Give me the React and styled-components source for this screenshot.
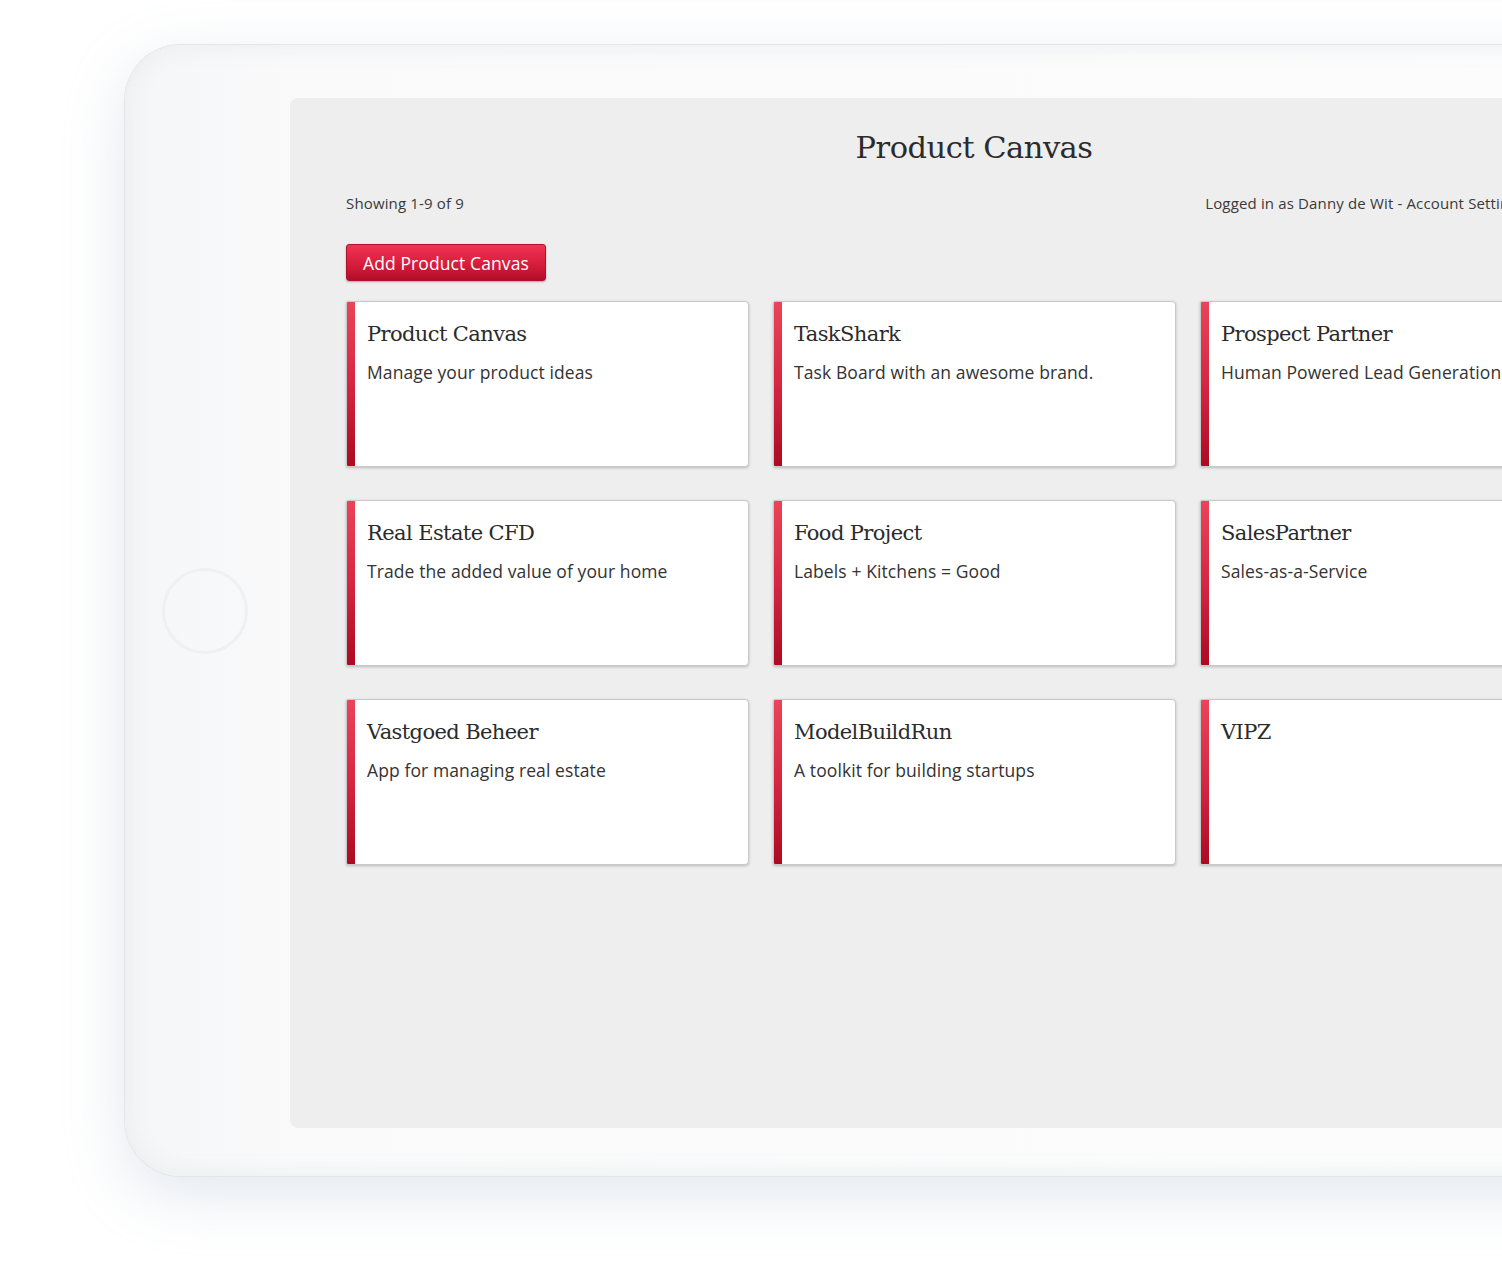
import React from 'react';
import styled, { createGlobalStyle } from 'styled-components';

const Global = createGlobalStyle`
  html, body {
    margin: 0;
    padding: 0;
    background: #ffffff;
    overflow: hidden;
  }
`;

const Stage = styled.div`
  width: 1502px;
  height: 1268px;
  overflow: hidden;
  background: #ffffff;
  padding-top: 45px;
  box-sizing: border-box;
`;

const Device = styled.div`
  margin-left: 125px;
  width: 1700px;
  height: 1131px;
  border-radius: 56px 0 0 56px;
  background: linear-gradient(90deg, #f5f6f7 0%, #fafafb 10%, #fdfdfd 100%);
  box-shadow: 0 0 0 1px #e2e5ea, 0 18px 60px rgba(160, 175, 200, 0.3),
    inset 0 0 24px rgba(225, 228, 232, 0.6);
  display: flex;
  align-items: flex-start;
`;

const Bezel = styled.div`
  width: 165px;
  height: 100%;
  display: flex;
  align-items: center;
  justify-content: center;
  flex-shrink: 0;
`;

const HomeButton = styled.div`
  width: 80px;
  height: 80px;
  border-radius: 50%;
  border: 3px solid #eef0f2;
  margin-right: 6px;
`;

const Screen = styled.div`
  margin-top: 53px;
  width: 1368px;
  height: 1030px;
  background: #eeeeee;
  border-radius: 8px 0 0 8px;
  padding: 26px 56px 0 56px;
  box-sizing: border-box;
  font-family: "Open Sans", "Noto Sans", sans-serif;
  color: #333;
`;

const Title = styled.h1`
  margin: 0;
  text-align: center;
  font-family: "DejaVu Serif", "Liberation Serif", serif;
  font-weight: normal;
  font-size: 30.5px;
  line-height: 48px;
  letter-spacing: -0.5px;
  color: #2b2b2b;
`;

const InfoRow = styled.div`
  display: flex;
  justify-content: space-between;
  margin-top: 20px;
  font-size: 15px;
  letter-spacing: 0.15px;
  line-height: 22px;
  color: #3a3a3a;
`;

const Account = styled.span`
  margin-right: 77px;
  white-space: nowrap;
`;

const AddButton = styled.button`
  margin-top: 30px;
  height: 37px;
  padding: 0 16px;
  border: 1px solid #b11029;
  border-radius: 3px;
  background: linear-gradient(180deg, #ee3553 0%, #d71d3b 55%, #b30d28 100%);
  color: #fff;
  font-family: "Open Sans", "Noto Sans", sans-serif;
  font-size: 17.5px;
  letter-spacing: 0.1px;
  box-shadow: 0 1px 2px rgba(0, 0, 0, 0.3);
`;

const Grid = styled.div`
  margin-top: 20px;
  display: grid;
  grid-template-columns: repeat(3, 403px);
  column-gap: 24px;
  row-gap: 33px;
`;

const Card = styled.div`
  height: 166px;
  display: flex;
  background: #fff;
  border: 1px solid #c9c9c9;
  border-radius: 2px 4px 4px 2px;
  box-shadow: 0 1px 3px rgba(0, 0, 0, 0.22);
  box-sizing: border-box;
  overflow: hidden;
`;

const Stripe = styled.div`
  width: 8px;
  flex-shrink: 0;
  background: linear-gradient(180deg, #ec4359 0%, #d52642 50%, #ad0a22 100%);
`;

const CardBody = styled.div`
  padding: 18px 12px 0 12px;
  white-space: nowrap;
`;

const CardTitle = styled.h2`
  margin: 0;
  font-family: "DejaVu Serif", "Liberation Serif", serif;
  font-weight: normal;
  font-size: 21px;
  line-height: 28px;
  letter-spacing: -0.6px;
  color: #2b2b2b;
`;

const CardText = styled.p`
  margin: 12px 0 0;
  font-size: 17.5px;
  letter-spacing: 0.1px;
  line-height: 24px;
  color: #333;
`;

const canvases = [
  { title: 'Product Canvas', text: 'Manage your product ideas' },
  { title: 'TaskShark', text: 'Task Board with an awesome brand.' },
  { title: 'Prospect Partner', text: 'Human Powered Lead Generation' },
  { title: 'Real Estate CFD', text: 'Trade the added value of your home' },
  { title: 'Food Project', text: 'Labels + Kitchens = Good' },
  { title: 'SalesPartner', text: 'Sales-as-a-Service' },
  { title: 'Vastgoed Beheer', text: 'App for managing real estate' },
  { title: 'ModelBuildRun', text: 'A toolkit for building startups' },
  { title: 'VIPZ', text: '' },
];

export default function App() {
  return (
    <Stage>
      <Global />
      <Device>
        <Bezel>
          <HomeButton />
        </Bezel>
        <Screen>
          <Title>Product Canvas</Title>
          <InfoRow>
            <span>Showing 1-9 of 9</span>
            <Account>Logged in as Danny de Wit - Account Settings</Account>
          </InfoRow>
          <AddButton>Add Product Canvas</AddButton>
          <Grid>
            {canvases.map((c) => (
              <Card key={c.title}>
                <Stripe />
                <CardBody>
                  <CardTitle>{c.title}</CardTitle>
                  {c.text && <CardText>{c.text}</CardText>}
                </CardBody>
              </Card>
            ))}
          </Grid>
        </Screen>
      </Device>
    </Stage>
  );
}
